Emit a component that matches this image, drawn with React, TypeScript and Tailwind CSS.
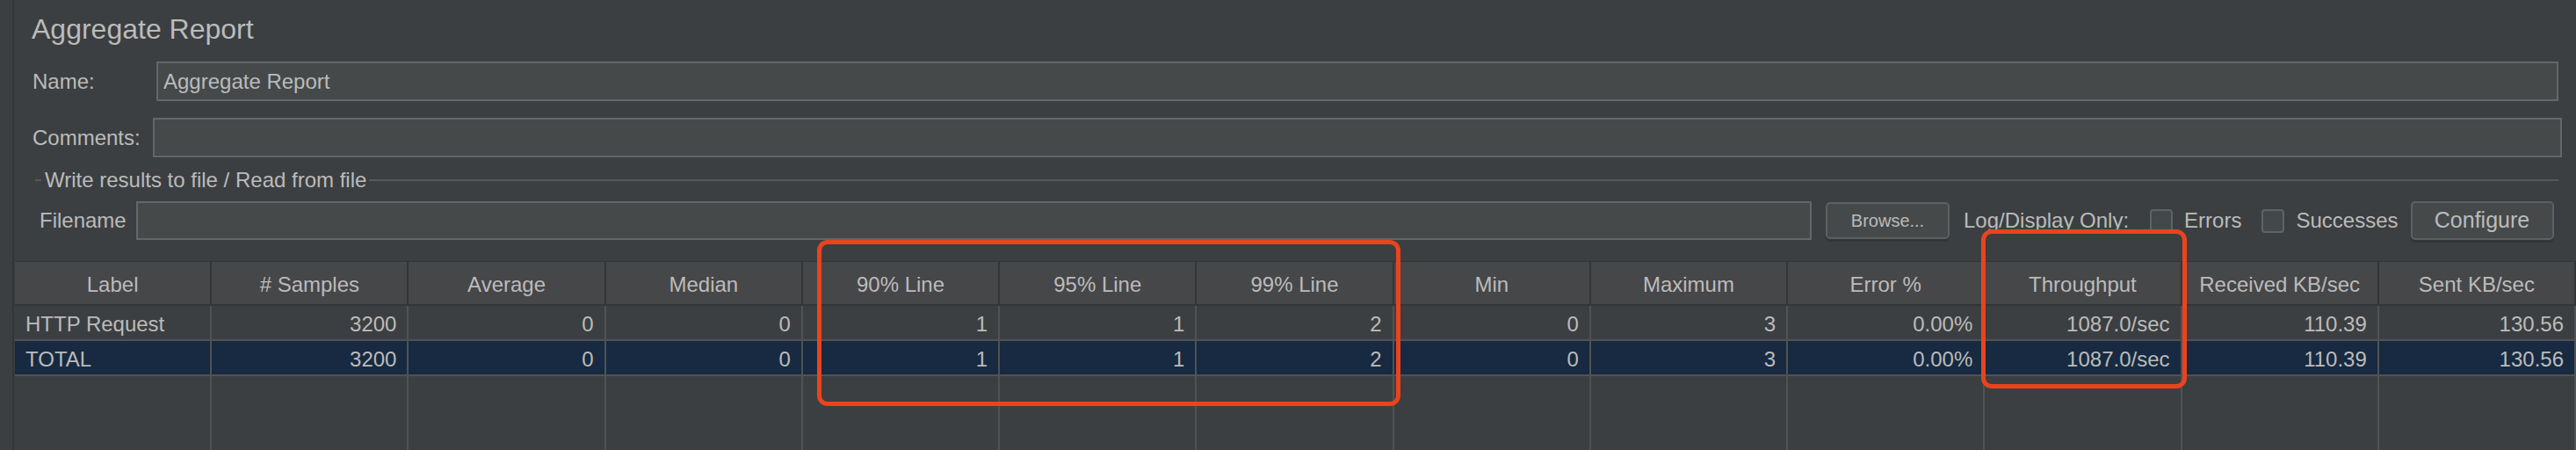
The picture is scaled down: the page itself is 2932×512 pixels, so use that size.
import React from 'react';

const headers = [
  'Label', '# Samples', 'Average', 'Median', '90% Line', '95% Line', '99% Line',
  'Min', 'Maximum', 'Error %', 'Throughput', 'Received KB/sec', 'Sent KB/sec',
];

const rows = [
  { selected: false, cells: ['HTTP Request', '3200', '0', '0', '1', '1', '2', '0', '3', '0.00%', '1087.0/sec', '110.39', '130.56'] },
  { selected: true, cells: ['TOTAL', '3200', '0', '0', '1', '1', '2', '0', '3', '0.00%', '1087.0/sec', '110.39', '130.56'] },
];

const gridCols = 'grid grid-cols-[repeat(13,minmax(0,1fr))]';

function Checkbox({ label }: { label: string }) {
  return (
    <div className="flex items-center">
      <div className="w-[26px] h-[27px] bg-[#43494a] border-2 border-[#5f6365] rounded-[4px]" />
      <span className="ml-[13px] text-[24px]">{label}</span>
    </div>
  );
}

export default function App() {
  return (
    <div className="relative w-[2932px] h-[512px] bg-[#3c3f41] flex overflow-hidden text-[#bbbbbb] font-['Liberation_Sans',Arial,sans-serif]">
      <div className="w-[14px] shrink-0" />
      <div className="w-[2px] shrink-0 bg-[#323436]" />

      <div className="flex-1 min-w-0 flex flex-col">
        {/* Title */}
        <div className="mt-[13px] h-[40px] pl-[20px] text-[32px] leading-[40px]">Aggregate Report</div>

        {/* Name */}
        <div className="mt-[17px] h-[45px] flex items-center pl-[21px] pr-[20px]">
          <span className="w-[141px] shrink-0 text-[24px]">Name:</span>
          <div className="flex-1 h-full flex items-center bg-[#45494a] border-2 border-[#646668] px-[6px] text-[24px]">
            Aggregate Report
          </div>
        </div>

        {/* Comments */}
        <div className="mt-[19px] h-[45px] flex items-center pl-[21px] pr-[16px]">
          <span className="w-[137px] shrink-0 text-[24px]">Comments:</span>
          <div className="flex-1 h-full bg-[#45494a] border-2 border-[#646668]" />
        </div>

        {/* Write results section */}
        <div className="mt-[14px] h-[24px] flex items-center pl-[24px] pr-[20px]">
          <div className="w-[7px] h-[2px] bg-[#57595b]" />
          <span className="ml-[4px] text-[24px] leading-[24px]">Write results to file / Read from file</span>
          <div className="ml-[3px] flex-1 h-[2px] bg-[#57595b]" />
        </div>

        {/* Filename */}
        <div className="mt-[12px] h-[44px] flex items-center pl-[29px]">
          <span className="w-[110px] shrink-0 text-[24px]">Filename</span>
          <div className="w-[1907px] shrink-0 h-full bg-[#45494a] border-2 border-[#646668]" />
          <button className="ml-[16px] w-[141px] h-[42px] shrink-0 bg-[#45494a] border-2 border-[#5c6062] rounded-[5px] shadow-[0_3px_0_#333537] text-[20px] text-[#bbbbbb]">
            Browse...
          </button>
          <span className="ml-[16px] text-[24px]">Log/Display Only:</span>
          <div className="ml-[24px]"><Checkbox label="Errors" /></div>
          <div className="ml-[23px]"><Checkbox label="Successes" /></div>
          <button className="ml-[14px] w-[163px] h-[44px] shrink-0 bg-[#45494a] border-2 border-[#5c6062] rounded-[5px] shadow-[0_3px_0_#333537] text-[25px] text-[#bbbbbb]">
            Configure
          </button>
        </div>

        {/* Table */}
        <div className="mt-[24px] ml-[1px] flex-1 flex flex-col text-[24px]">
          <div className={`${gridCols} border-t border-b-2 border-[#333537]`}>
            {headers.map(h => (
              <div key={h} className="h-[48px] pt-[4px] flex items-center justify-center bg-[#464749] border-r-2 border-[#333537] whitespace-nowrap">
                {h}
              </div>
            ))}
          </div>
          {rows.map((r, i) => (
            <div key={i} className={`${gridCols} ${r.selected ? 'bg-[#172a41]' : ''} border-b-2 border-[#505254]`}>
              {r.cells.map((c, j) => (
                <div
                  key={j}
                  className={`h-[38px] pt-[3px] flex items-center border-r-2 border-[#505254] whitespace-nowrap ${j === 0 ? 'pl-[12px]' : 'justify-end pr-[12px]'}`}
                >
                  {c}
                </div>
              ))}
            </div>
          ))}
          <div className={`${gridCols} flex-1`}>
            {headers.map(h => (
              <div key={h} className="border-r-2 border-[#505254]" />
            ))}
          </div>
        </div>
      </div>

      {/* highlight boxes */}
      <div className="absolute left-[930px] top-[273px] w-[664px] h-[189px] border-[5px] border-[#e9441e] rounded-[12px]" />
      <div className="absolute left-[2255px] top-[261px] w-[234px] h-[181px] border-[5px] border-[#e9441e] rounded-[12px]" />
    </div>
  );
}
